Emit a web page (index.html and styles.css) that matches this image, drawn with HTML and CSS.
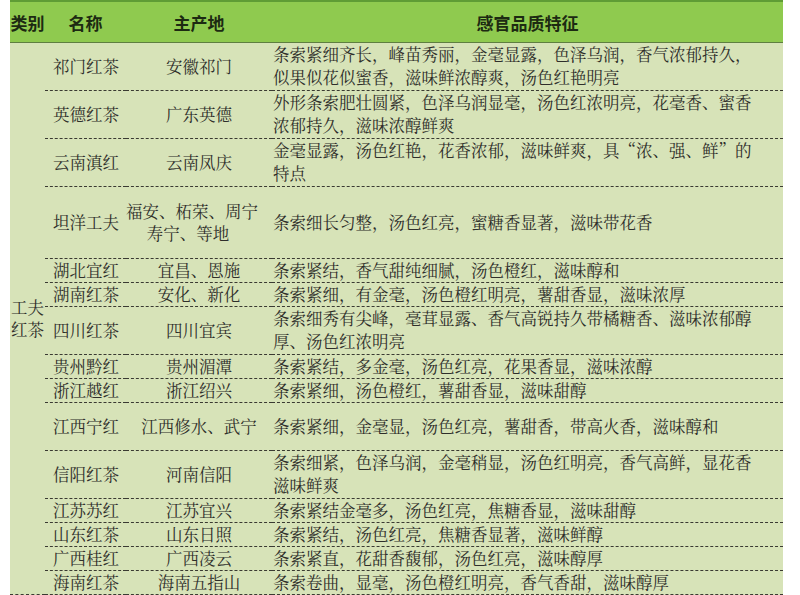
FILE: index.html
```html
<!DOCTYPE html>
<html lang="zh-CN">
<head>
<meta charset="utf-8">
<title>工夫红茶</title>
<link rel="stylesheet" href="styles.css">
</head>
<body>
<div class="sheet">
<table class="tea">
  <colgroup>
    <col class="c-cat"><col class="c-name"><col class="c-origin"><col class="c-desc">
  </colgroup>
  <thead>
    <tr class="head">
      <th>类别</th><th>名称</th><th>主产地</th><th>感官品质特征</th>
    </tr>
  </thead>
  <tbody>
    <tr class="r2 first">
      <td class="cat" rowspan="15">工夫<br>红茶</td>
      <td class="name">祁门红茶</td><td class="origin">安徽祁门</td>
      <td class="desc">条索紧细齐长，峰苗秀丽，金毫显露，色泽乌润，香气浓郁持久，<br>似果似花似蜜香，滋味鲜浓醇爽，汤色红艳明亮</td>
    </tr>
    <tr class="r2">
      <td class="name">英德红茶</td><td class="origin">广东英德</td>
      <td class="desc">外形条索肥壮圆紧，色泽乌润显毫，汤色红浓明亮，花毫香、蜜香<br>浓郁持久，滋味浓醇鲜爽</td>
    </tr>
    <tr class="r2">
      <td class="name">云南滇红</td><td class="origin">云南凤庆</td>
      <td class="desc">金毫显露，汤色红艳，花香浓郁，滋味鲜爽，具“浓、强、鲜”的<br>特点</td>
    </tr>
    <tr class="r3">
      <td class="name">坦洋工夫</td><td class="origin wide">福安、柘荣、周宁<br>寿宁、等地</td>
      <td class="desc">条索细长匀整，汤色红亮，蜜糖香显著，滋味带花香</td>
    </tr>
    <tr class="r1">
      <td class="name">湖北宜红</td><td class="origin">宜昌、恩施</td>
      <td class="desc">条索紧结，香气甜纯细腻，汤色橙红，滋味醇和</td>
    </tr>
    <tr class="r1">
      <td class="name">湖南红茶</td><td class="origin">安化、新化</td>
      <td class="desc">条索紧细，有金毫，汤色橙红明亮，薯甜香显，滋味浓厚</td>
    </tr>
    <tr class="r2">
      <td class="name">四川红茶</td><td class="origin">四川宜宾</td>
      <td class="desc">条索细秀有尖峰，毫茸显露、香气高锐持久带橘糖香、滋味浓郁醇<br>厚、汤色红浓明亮</td>
    </tr>
    <tr class="r1">
      <td class="name">贵州黔红</td><td class="origin">贵州湄潭</td>
      <td class="desc">条索紧结，多金毫，汤色红亮，花果香显，滋味浓醇</td>
    </tr>
    <tr class="r1">
      <td class="name">浙江越红</td><td class="origin">浙江绍兴</td>
      <td class="desc">条索紧细，汤色橙红，薯甜香显，滋味甜醇</td>
    </tr>
    <tr class="r2">
      <td class="name">江西宁红</td><td class="origin">江西修水、武宁</td>
      <td class="desc">条索紧细，金毫显，汤色红亮，薯甜香，带高火香，滋味醇和</td>
    </tr>
    <tr class="r2">
      <td class="name">信阳红茶</td><td class="origin">河南信阳</td>
      <td class="desc">条索细紧，色泽乌润，金毫稍显，汤色红明亮，香气高鲜，显花香<br>滋味鲜爽</td>
    </tr>
    <tr class="r1">
      <td class="name">江苏苏红</td><td class="origin">江苏宜兴</td>
      <td class="desc">条索紧结金毫多，汤色红亮，焦糖香显，滋味甜醇</td>
    </tr>
    <tr class="r1">
      <td class="name">山东红茶</td><td class="origin">山东日照</td>
      <td class="desc">条索紧结，汤色红亮，焦糖香显著，滋味鲜醇</td>
    </tr>
    <tr class="r1">
      <td class="name">广西桂红</td><td class="origin">广西凌云</td>
      <td class="desc">条索紧直，花甜香馥郁，汤色红亮，滋味醇厚</td>
    </tr>
    <tr class="r1 last">
      <td class="name">海南红茶</td><td class="origin">海南五指山</td>
      <td class="desc">条索卷曲，显毫，汤色橙红明亮，香气香甜，滋味醇厚</td>
    </tr>
  </tbody>
</table>
</div>
</body>
</html>
```

FILE: styles.css
```css
html, body {
  margin: 0;
  padding: 0;
  background: #ffffff;
}

.sheet {
  margin-left: 10px;
  width: 773px;
  background: #d7e3b8;
}

.tea {
  width: 773px;
  border-collapse: collapse;
  table-layout: fixed;
  font-family: "Noto Serif CJK SC", "Source Han Serif SC", "AR PL UMing CN", "Noto Sans CJK SC", sans-serif;
  font-size: 16.5px;
  color: #2e2e2a;
}

.c-cat { width: 35px; }
.c-name { width: 81px; }
.c-origin { width: 146px; }
.c-desc { width: 511px; }

.tea td, .tea th {
  padding: 0;
  vertical-align: middle;
}

.head {
  height: 41px;
  background: #8fca4f;
  border-top: 2px solid #5f9c35;
  border-bottom: 1px solid #5e7f40;
}

.head th {
  font-family: "Noto Sans CJK SC", sans-serif;
  font-weight: 700;
  font-size: 17px;
  color: #1d2a12;
  text-align: center;
  padding-top: 1px;
}

.tea tbody tr {
  border-bottom: 1px dashed #3a3a32;
}

.r1 { height: 24px; }
.r2 { height: 48px; }
.r3 { height: 72px; }

.tea tbody td {
  line-height: 23px;
}

.cat {
  text-align: center;
  line-height: 22px !important;
  border-bottom: 1px dashed #3a3a32;
}

.name {
  padding-left: 8px !important;
  white-space: nowrap;
}

.origin {
  text-align: center;
  white-space: nowrap;
}

.origin.wide {
  line-height: 22px !important;
  padding-right: 22px !important;
  text-align: center;
}

.desc {
  padding-left: 1px !important;
  white-space: nowrap;
}
```
